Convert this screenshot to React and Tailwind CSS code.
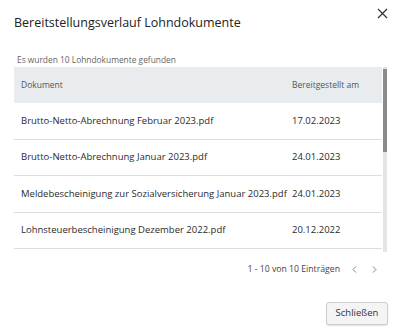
const docs = [
    { name: "Brutto-Netto-Abrechnung Februar 2023.pdf", date: "17.02.2023" },
    { name: "Brutto-Netto-Abrechnung Januar 2023.pdf", date: "24.01.2023" },
    { name: "Meldebescheinigung zur Sozialversicherung Januar 2023.pdf", date: "24.01.2023" },
    { name: "Lohnsteuerbescheinigung Dezember 2022.pdf", date: "20.12.2022" },
    { name: "Brutto-Netto-Abrechnung Dezember 2022.pdf", date: "19.12.2022" },
    { name: "Brutto-Netto-Abrechnung November 2022.pdf", date: "18.11.2022" },
    { name: "Brutto-Netto-Abrechnung Oktober 2022.pdf", date: "19.10.2022" },
    { name: "Brutto-Netto-Abrechnung September 2022.pdf", date: "20.09.2022" },
    { name: "Brutto-Netto-Abrechnung August 2022.pdf", date: "19.08.2022" },
    { name: "Brutto-Netto-Abrechnung Juli 2022.pdf", date: "19.07.2022" },
];

function CloseIcon() {
    return (
        <svg width="11" height="11" viewBox="0 0 11 11" fill="none" aria-hidden="true">
            <path d="M1 1l9 9M10 1l-9 9" stroke="#333" strokeWidth="1.2" />
        </svg>
    );
}

function Chevron({ dir }) {
    return (
        <svg width="5" height="7" viewBox="0 0 5 7" fill="none" aria-hidden="true">
            <path
                d={dir === "left" ? "M4 0.5L1 3.5 4 6.5" : "M1 0.5l3 3-3 3"}
                stroke="#777"
                strokeWidth="0.9"
            />
        </svg>
    );
}

export default function App() {
    return (
        <div className="relative h-[333px] w-[400px] overflow-hidden bg-white font-['Open_Sans',sans-serif] text-[#333]">
            <div className="flex items-start justify-between pl-[14px] pr-[12px] pt-[13px]">
                <h2 className="text-[12.5px] leading-[20px] text-[#222]">
                    Bereitstellungsverlauf Lohndokumente
                </h2>
                <button type="button" className="mt-[-5px]">
                    <CloseIcon />
                </button>
            </div>

            <div className="pl-[14px] pt-[21px]">
                <p className="pl-[3px] text-[8.4px] leading-[12px] text-[#666]">
                    Es wurden 10 Lohndokumente gefunden
                </p>

                <div className="relative mt-[1px] w-[373px]">
                    <div className="h-[185px] w-[368px] overflow-hidden">
                        <div className="flex h-[36px] items-center bg-[#e9ecef] text-[8.5px] text-[#555]">
                            <div className="w-[278px] pl-[7px]">Dokument</div>
                            <div>Bereitgestellt am</div>
                        </div>
                        {docs.map(doc => (
                            <div
                                key={doc.name}
                                className="flex h-[36.5px] items-center border-b border-[#dedede] text-[9.5px] text-[#2b2b2b]"
                            >
                                <div className="w-[278px] whitespace-nowrap pl-[7px]">{doc.name}</div>
                                <div>{doc.date}</div>
                            </div>
                        ))}
                    </div>
                    <div className="absolute right-0 top-0 h-[185px] w-[4px] bg-[#e4e4e4]">
                        <div className="mt-[2px] h-[83px] w-full bg-[#8a8a8a]" />
                    </div>
                </div>

                <div className="mt-[11px] flex w-[373px] items-center justify-end pr-[10px] text-[8.7px] text-[#444]">
                    <span>1 - 10 von 10 Einträgen</span>
                    <span className="ml-[12px] flex">
                        <Chevron dir="left" />
                    </span>
                    <span className="ml-[15px] flex">
                        <Chevron dir="right" />
                    </span>
                </div>

                <div className="mt-[26px] flex w-[374px] justify-end">
                    <button
                        type="button"
                        className="h-[23px] w-[62px] rounded-[3px] border border-[#cfcfcf] bg-[#f4f4f4] text-[9.5px] text-[#333] shadow-[0_1px_1px_rgba(0,0,0,0.12)]"
                    >
                        Schließen
                    </button>
                </div>
            </div>
        </div>
    );
}
